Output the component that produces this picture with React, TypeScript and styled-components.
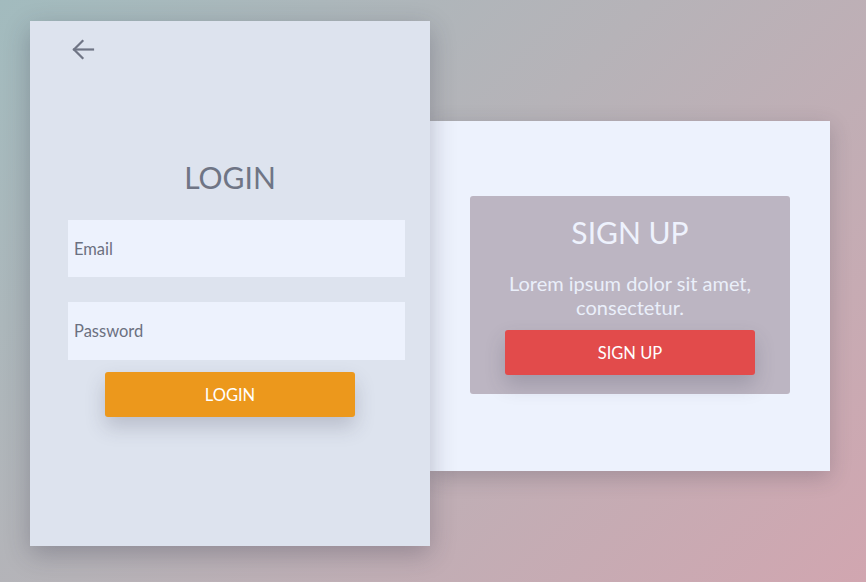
import React from "react";
import styled, { createGlobalStyle } from "styled-components";

const Global = createGlobalStyle`
  html, body { margin: 0; padding: 0; }
  body { font-family: Lato, "Open Sans", sans-serif; }
  * { box-sizing: border-box; }
`;

const Page = styled.div`
  width: 866px;
  height: 582px;
  overflow: hidden;
  background: linear-gradient(135deg, #a2bbbe 0%, #b6b3b8 45%, #d1a6b0 100%);
  display: flex;
  align-items: flex-start;
  padding: 21px 0 0 30px;
`;

const LoginCard = styled.section`
  position: relative;
  z-index: 2;
  width: 400px;
  height: 525px;
  background: #dde3ee;
  box-shadow: 0 8px 24px rgba(40, 40, 60, 0.28);
  display: flex;
  flex-direction: column;
  align-items: center;
  padding-top: 18px;
`;

const BackRow = styled.div`
  align-self: stretch;
  display: flex;
  padding-left: 42px;
  height: 21px;
`;

const BackIcon = styled.svg`
  width: 23px;
  height: 21px;
`;

const Title = styled.h1<{ $light?: boolean }>`
  margin: 0;
  font-family: Lato, sans-serif;
  font-weight: 400;
  font-size: 30px;
  line-height: 36px;
  color: ${(p) => (p.$light ? "#eef2fd" : "#6f7585")};
`;

const LoginTitle = styled(Title)`
  margin-top: 99px;
  margin-bottom: 25px;
`;

const Input = styled.div<{ $gap?: number; $h?: number }>`
  align-self: stretch;
  margin: 0 25px ${(p) => p.$gap ?? 0}px 38px;
  height: ${(p) => p.$h ?? 57}px;
  background: #edf2fd;
  display: flex;
  align-items: center;
  padding-left: 6px;
  font-size: 16.5px;
  color: #6b7080;
`;

const Button = styled.button<{ $color: string }>`
  width: 250px;
  height: 45px;
  border: none;
  border-radius: 3px;
  background: ${(p) => p.$color};
  color: #ffffff;
  font-family: Lato, sans-serif;
  font-size: 16.5px;
  box-shadow: 0 10px 20px rgba(60, 60, 80, 0.22);
  cursor: pointer;
`;

const LoginButton = styled(Button)`
  margin-top: 12px;
`;

const SignupPanel = styled.section`
  position: relative;
  z-index: 1;
  margin-top: 100px;
  width: 400px;
  height: 350px;
  background: #edf2fd;
  box-shadow: 0 6px 20px rgba(40, 40, 60, 0.22);
  display: flex;
  justify-content: center;
  padding-top: 75px;
`;

const SignupBox = styled.div`
  width: 320px;
  height: 198px;
  background: #bcb5c2;
  border-radius: 3px;
  display: flex;
  flex-direction: column;
  align-items: center;
  padding-top: 18px;
`;

const Lorem = styled.p`
  margin: 21px 0 11px;
  font-size: 20px;
  line-height: 24px;
  color: #eaeffa;
  text-align: center;
  width: 290px;
`;

export default function App() {
  return (
    <>
      <Global />
      <Page>
        <LoginCard>
          <BackRow>
            <BackIcon viewBox="0 0 23 21" fill="none" stroke="#6f7585" strokeWidth="2.2" strokeLinecap="square">
              <path d="M2 10.5H21" />
              <path d="M10.5 2L2 10.5L10.5 19" />
            </BackIcon>
          </BackRow>
          <LoginTitle>LOGIN</LoginTitle>
          <Input $gap={25}>Email</Input>
          <Input $h={58}>Password</Input>
          <LoginButton $color="#ec981c">LOGIN</LoginButton>
        </LoginCard>
        <SignupPanel>
          <SignupBox>
            <Title $light>SIGN UP</Title>
            <Lorem>Lorem ipsum dolor sit amet, consectetur.</Lorem>
            <Button $color="#e24b4b">SIGN UP</Button>
          </SignupBox>
        </SignupPanel>
      </Page>
    </>
  );
}
